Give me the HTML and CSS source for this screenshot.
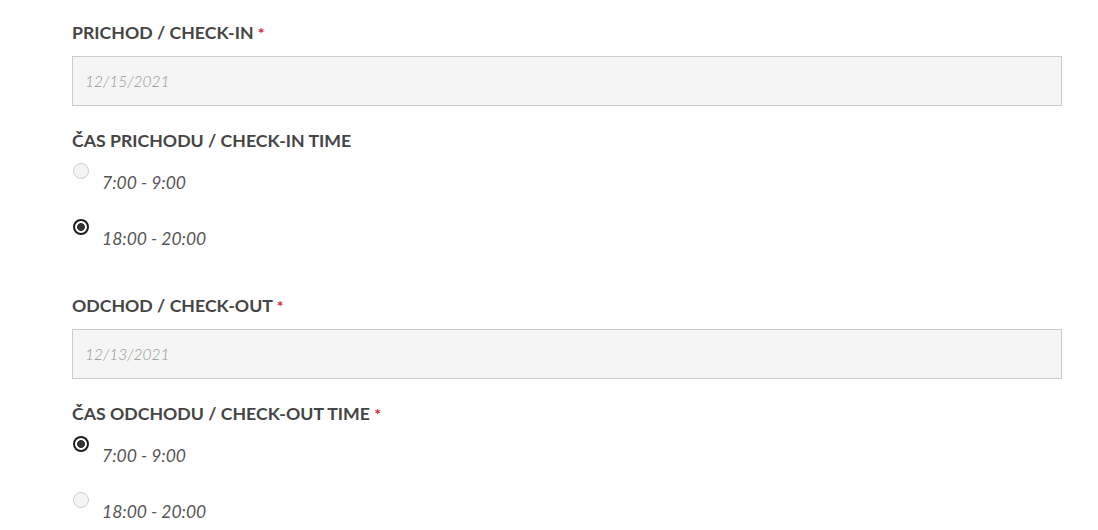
FILE: index.html
```html
<!DOCTYPE html>
<html lang="sk">
<head>
<meta charset="utf-8">
<title>Rezervácia</title>
<link rel="stylesheet" href="styles.css">
</head>
<body>
<form class="form">
  <div class="field">
    <label class="label">PRICHOD / CHECK-IN <span class="req">*</span></label>
    <div class="input">12/15/2021</div>
  </div>
  <div class="field field-radio">
    <label class="label">ČAS PRICHODU / CHECK-IN TIME</label>
    <div class="options">
      <label class="option"><input type="radio" name="in"><span class="opt-text">7:00 - 9:00</span></label>
      <label class="option"><input type="radio" name="in" checked><span class="opt-text">18:00 - 20:00</span></label>
    </div>
  </div>
  <div class="field">
    <label class="label">ODCHOD / CHECK-OUT <span class="req">*</span></label>
    <div class="input">12/13/2021</div>
  </div>
  <div class="field field-radio">
    <label class="label">ČAS ODCHODU / CHECK-OUT TIME <span class="req">*</span></label>
    <div class="options">
      <label class="option"><input type="radio" name="out" checked><span class="opt-text">7:00 - 9:00</span></label>
      <label class="option"><input type="radio" name="out"><span class="opt-text">18:00 - 20:00</span></label>
    </div>
  </div>
</form>
</body>
</html>
```
FILE: styles.css
```css
html, body {
  margin: 0;
  padding: 0;
  background: #ffffff;
}
body {
  font-family: Lato, "Open Sans", sans-serif;
  color: #444444;
}
.form {
  width: 990px;
  padding: 22px 0 0 72px;
  display: flex;
  flex-direction: column;
}
.label {
  display: block;
  font-weight: 700;
  font-size: 17.7px;
  line-height: 22px;
  color: #454545;
}
.req {
  color: #d3263a;
  font-weight: 700;
  font-size: 16px;
}
.input {
  margin-top: 12px;
  height: 48px;
  box-sizing: content-box;
  border: 1px solid #cccccc;
  background: #f5f5f5;
  display: flex;
  align-items: center;
  padding: 0 12px;
  font-style: italic;
  font-size: 15.5px;
  color: #959595;
  font-weight: 300;
}
.field + .field {
  margin-top: 24px;
}
.field-radio + .field {
  margin-top: 45px;
}
.options {
  margin-top: 11px;
  display: flex;
  flex-direction: column;
  gap: 25px;
}
.option {
  display: flex;
  align-items: flex-start;
}
.option input {
  appearance: none;
  -webkit-appearance: none;
  margin: 0 0 0 1px;
  width: 16px;
  height: 16px;
  border-radius: 50%;
  border: 1px solid #cfcfcf;
  background: #f4f4f4;
  box-sizing: border-box;
  flex: none;
}
.option input:checked {
  border: 2px solid #1e1e1e;
  background: radial-gradient(circle, #333333 0 3.6px, #ffffff 4.2px);
}
.opt-text {
  margin-left: 13px;
  padding-top: 9px;
  font-style: italic;
  font-size: 17.5px;
  line-height: 22px;
  color: #555555;
}
```
